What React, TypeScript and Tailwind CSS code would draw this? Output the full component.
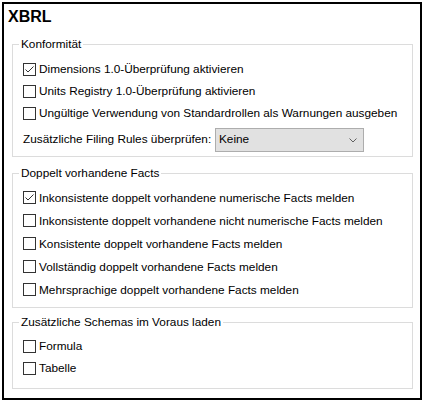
import React from 'react';

const CheckBox = ({ checked }: { checked?: boolean }) => (
  <span className="w-[13px] h-[13px] border border-[#333333] bg-white flex items-center justify-center shrink-0">
    {checked && (
      <svg width="11" height="11" viewBox="0 0 11 11" className="block">
        <polyline points="1.5,5.5 4,8 9.5,2.5" fill="none" stroke="#333333" strokeWidth="1" />
      </svg>
    )}
  </span>
);

const Row = ({ label, checked, h }: { label: string; checked?: boolean; h: string }) => (
  <div className={`flex items-center gap-[3px] ${h}`}>
    <CheckBox checked={checked} />
    <span className="leading-4 whitespace-nowrap">{label}</span>
  </div>
);

const Group = ({ title, children, pt, pb }: { title: string; children: React.ReactNode; pt: string; pb: string }) => (
  <fieldset className={`border border-[#dcdcdc] ml-[8px] w-[401px] px-[6px] ${pt} ${pb}`}>
    <legend className="px-[2px] leading-4">{title}</legend>
    <div className="pl-[4px]">{children}</div>
  </fieldset>
);

export default function App() {
  return (
    <div
      className="w-[424px] h-[402px] bg-white p-[2px] text-[11.8px] text-black"
      style={{ fontFamily: '"Liberation Sans", Arial, sans-serif' }}
    >
      <div className="border-2 border-black h-[398px] w-[420px]">
        <h1 className="text-[16px] font-bold leading-5 mt-[3px] pl-[4px]">XBRL</h1>

        {/* Konformität */}
        <div className="mt-[9px]">
          <Group title="Konformität" pt="pt-[6px]" pb="pb-[4px]">
            <Row label="Dimensions 1.0-Überprüfung aktivieren" checked h="h-[22px]" />
            <Row label="Units Registry 1.0-Überprüfung aktivieren" h="h-[22px]" />
            <Row label="Ungültige Verwendung von Standardrollen als Warnungen ausgeben" h="h-[22px]" />
            <div className="flex items-center mt-[4px] h-[24px]">
              <span className="whitespace-nowrap">Zusätzliche Filing Rules überprüfen:</span>
              <div className="ml-auto mr-[42px] w-[149px] h-[24px] bg-[#e1e1e1] border border-[#adadad] flex items-center pl-[3px] pr-[6px]">
                <span className="flex-1">Keine</span>
                <svg width="8" height="5" viewBox="0 0 8 5" className="block">
                  <polyline points="0.5,0.5 4,4 7.5,0.5" fill="none" stroke="#606060" strokeWidth="1" />
                </svg>
              </div>
            </div>
          </Group>
        </div>

        {/* Doppelt vorhandene Facts */}
        <div className="mt-[8px]">
          <Group title="Doppelt vorhandene Facts" pt="pt-[5px]" pb="pb-[6px]">
            <Row label="Inkonsistente doppelt vorhandene numerische Facts melden" checked h="h-[23px]" />
            <Row label="Inkonsistente doppelt vorhandene nicht numerische Facts melden" h="h-[23px]" />
            <Row label="Konsistente doppelt vorhandene Facts melden" h="h-[23px]" />
            <Row label="Vollständig doppelt vorhandene Facts melden" h="h-[23px]" />
            <Row label="Mehrsprachige doppelt vorhandene Facts melden" h="h-[23px]" />
          </Group>
        </div>

        {/* Schemas */}
        <div className="mt-[6px]">
          <Group title="Zusätzliche Schemas im Voraus laden" pt="pt-[5px]" pb="pb-[9px]">
            <Row label="Formula" h="h-[22px]" />
            <Row label="Tabelle" h="h-[22px]" />
          </Group>
        </div>
      </div>
    </div>
  );
}
